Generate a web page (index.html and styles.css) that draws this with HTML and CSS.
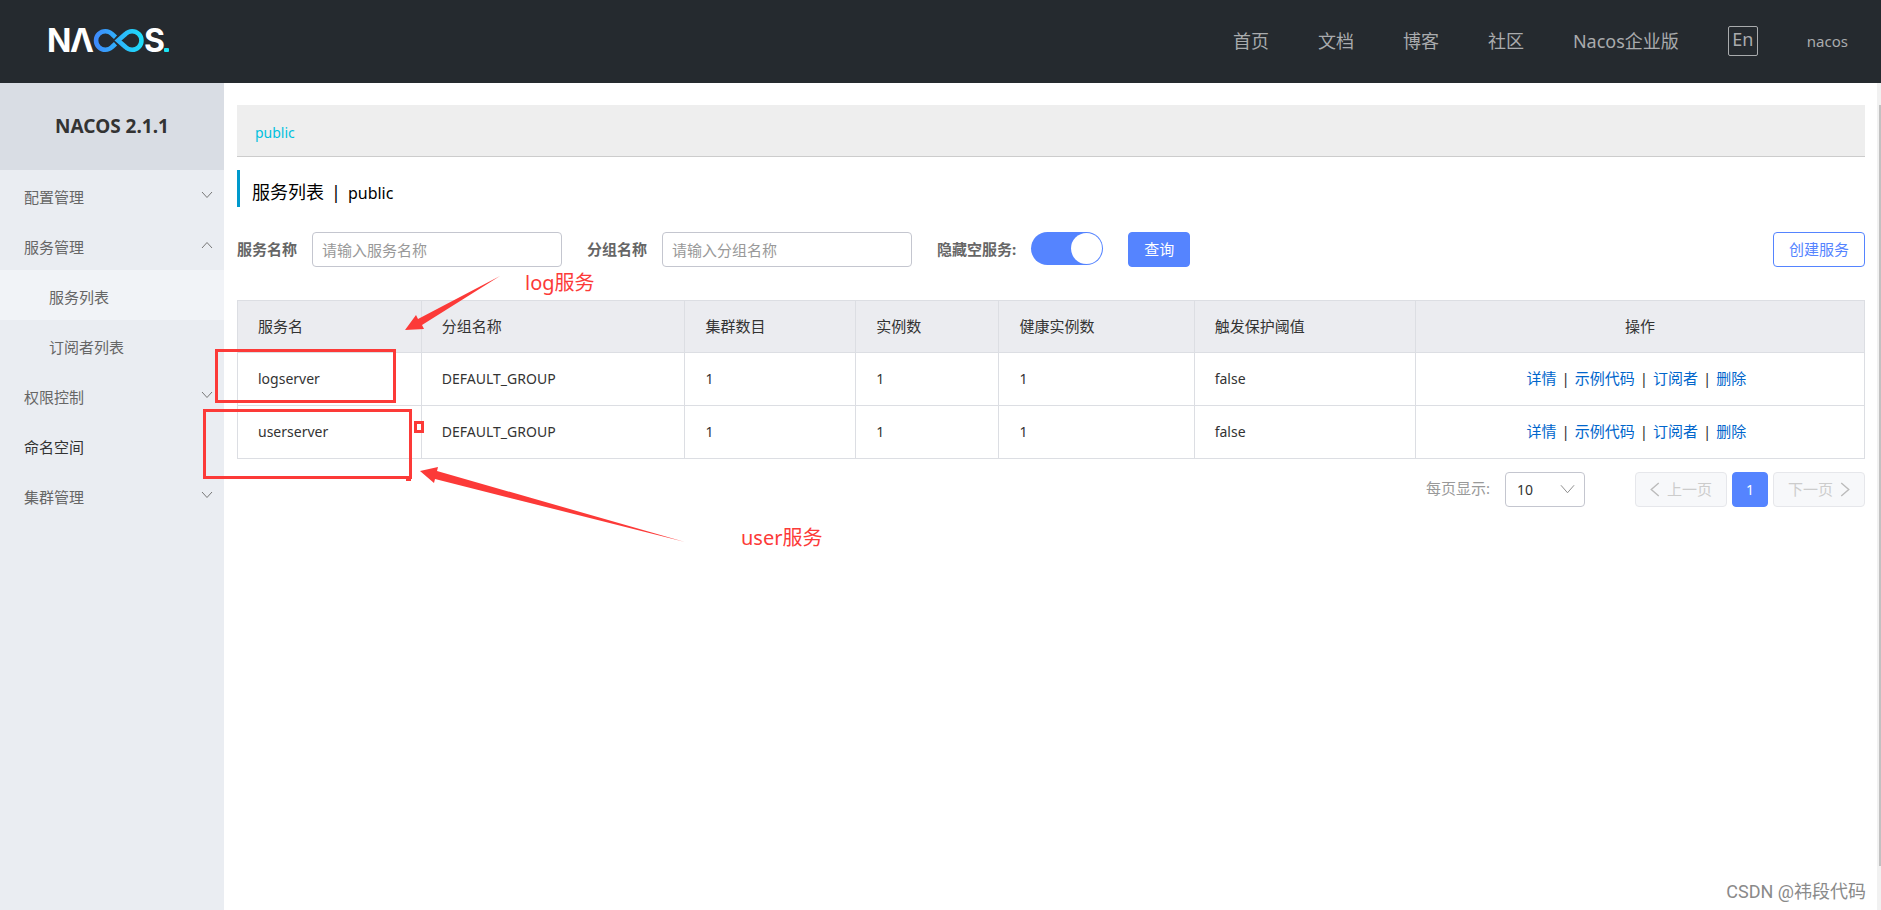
FILE: index.html
```html
<!DOCTYPE html>
<html lang="zh-CN">
<head>
<meta charset="utf-8">
<title>Nacos</title>
<link rel="stylesheet" href="styles.css">
</head>
<body>
<header class="topbar">
  <a class="logo" href="#" aria-label="Nacos">
    <svg width="130" height="48" viewBox="-4 -9 130 48">
      <defs>
        <linearGradient id="loop" gradientUnits="userSpaceOnUse" x1="46" y1="0" x2="96" y2="0">
          <stop offset="0" stop-color="#4088fb"/><stop offset="1" stop-color="#1ce0fa"/>
        </linearGradient>
      </defs>
      <g class="logo-text"><text x="-1" y="26">N</text><text x="22" y="26">Λ</text><text x="96" y="26">S</text></g>
      <g fill="none" stroke="url(#loop)" stroke-width="4.6">
        <path d="M67.500 11.200L64 8A9.300 9.300 0 1 0 64 21L67.500 17.800"/>
        <path d="M70 14.500L77.500 8A9.300 9.300 0 1 1 77.500 21Z"/>
      </g>
      <rect x="116" y="22" width="5" height="4" rx="1" fill="#1be4f5"/>
    </svg>
  </a>
  <nav class="nav">
    <a href="#">首页</a><a href="#">文档</a><a href="#">博客</a><a href="#">社区</a><a href="#">Nacos企业版</a>
    <button class="lang" type="button">En</button>
    <a class="user" href="#">nacos</a>
  </nav>
</header>
<div class="layout">
  <aside class="sidebar">
    <h1 class="version">NACOS 2.1.1</h1>
    <ul class="menu">
      <li><a href="#">配置管理<svg class="chev" viewBox="0 0 12 8"><path d="M1 1l5 5.500L11 1"/></svg></a></li>
      <li><a href="#">服务管理<svg class="chev" viewBox="0 0 12 8"><path d="M1 7l5-5.500L11 7"/></svg></a></li>
      <li><a class="sub active" href="#">服务列表</a></li>
      <li><a class="sub" href="#">订阅者列表</a></li>
      <li><a href="#">权限控制<svg class="chev" viewBox="0 0 12 8"><path d="M1 1l5 5.500L11 1"/></svg></a></li>
      <li><a class="leaf" href="#">命名空间</a></li>
      <li><a href="#">集群管理<svg class="chev" viewBox="0 0 12 8"><path d="M1 1l5 5.500L11 1"/></svg></a></li>
    </ul>
  </aside>
  <main class="content">
    <div class="namespaces"><a href="#">public</a></div>
    <h2 class="title">服务列表<span class="bar">|</span><span class="latin">public</span></h2>
    <form class="filters">
      <label for="service">服务名称</label>
      <input class="field" id="service" type="text" placeholder="请输入服务名称">
      <label class="next" for="group">分组名称</label>
      <input class="field" id="group" type="text" placeholder="请输入分组名称">
      <label class="next" for="hide">隐藏空服务:</label>
      <input class="switch" id="hide" type="checkbox" checked>
      <button class="btn primary" type="button">查询</button>
      <button class="btn outline" type="button">创建服务</button>
    </form>
    <table class="services">
      <colgroup><col class="c-name"><col class="c-group"><col class="c-cluster"><col class="c-inst"><col class="c-health"><col class="c-guard"><col></colgroup>
      <thead>
        <tr><th>服务名</th><th>分组名称</th><th>集群数目</th><th>实例数</th><th>健康实例数</th><th>触发保护阈值</th><th class="ops">操作</th></tr>
      </thead>
      <tbody>
        <tr><td>logserver</td><td>DEFAULT_GROUP</td><td>1</td><td>1</td><td>1</td><td>false</td>
          <td class="ops"><div class="actions"><a href="#">详情</a><span>|</span><a href="#">示例代码</a><span>|</span><a href="#">订阅者</a><span>|</span><a href="#">删除</a></div></td></tr>
        <tr><td>userserver</td><td>DEFAULT_GROUP</td><td>1</td><td>1</td><td>1</td><td>false</td>
          <td class="ops"><div class="actions"><a href="#">详情</a><span>|</span><a href="#">示例代码</a><span>|</span><a href="#">订阅者</a><span>|</span><a href="#">删除</a></div></td></tr>
      </tbody>
    </table>
    <div class="pager">
      <label for="size">每页显示:</label>
      <div class="select">
        <select id="size"><option>10</option></select>
        <svg viewBox="0 0 16 10"><path d="M1 1l7 8 7-8"/></svg>
      </div>
      <button class="page step" type="button" disabled><svg viewBox="0 0 10 16"><path d="M9 1L1 8l8 7"/></svg>上一页</button>
      <button class="page current" type="button">1</button>
      <button class="page step" type="button" disabled>下一页<svg viewBox="0 0 10 16"><path d="M1 1l8 7-8 7"/></svg></button>
    </div>
  </main>
  <div class="track"><div class="thumb"></div></div>
</div>
<div class="notes">
  <svg width="860" height="600" viewBox="0 0 860 600">
    <g fill="none" stroke="#fc3a38" stroke-width="3">
      <rect x="216.500" y="350.500" width="178" height="51"/>
      <rect x="204.500" y="410.500" width="206" height="67"/>
      <rect x="415.500" y="422.500" width="7" height="9"/>
    </g>
    <g fill="#fc3a38">
      <rect x="406" y="477" width="5" height="4"/>
      <path d="M405 330L416 315L418 319L500 276L422 325L424 329Z"/>
      <path d="M420 471L438 467L437 471L685 542L435 479L434 483Z"/>
    </g>
  </svg>
  <span class="note log">log服务</span>
  <span class="note usr">user服务</span>
</div>
<div class="watermark">CSDN @祎段代码</div>
</body>
</html>
```
FILE: styles.css
```css
* { box-sizing: border-box; }

body {
  margin: 0;
  min-height: 100vh;
  display: flex;
  flex-direction: column;
  position: relative;
  background: #fff;
  color: #333;
  font: 15px/20px "Noto Sans", "Noto Sans CJK SC", sans-serif;
}

a { color: inherit; text-decoration: none; }

button, input, select { font: inherit; }

.topbar {
  height: 83px;
  padding: 0 33px 2px 44px;
  display: flex;
  align-items: center;
  justify-content: space-between;
  background: #252a2f;
}

.logo svg { display: block; }

.logo-text {
  fill: #fff;
  font: 700 32px Inter, sans-serif;
}

.nav {
  display: flex;
  align-items: center;
  gap: 49px;
  color: #a9abad;
  font-size: 18px;
}

.lang {
  width: 30px;
  height: 30px;
  padding: 0 0 4px;
  border: 1px solid #a9abad;
  border-radius: 2px;
  background: none;
  color: inherit;
  line-height: 24px;
}

.user { font-size: 15px; }

.layout {
  flex: 1;
  display: grid;
  grid-template-columns: 224px 1fr 4px;
}

.sidebar { background: #eaedf2; }

.version {
  margin: 0;
  background: #d9dde4;
  font-size: 19px;
  line-height: 87px;
  text-align: center;
}

.menu {
  margin: 0;
  padding: 0;
  list-style: none;
  color: #666;
}

.menu a {
  height: 50px;
  padding: 3px 11px 0 24px;
  display: flex;
  align-items: center;
  justify-content: space-between;
}

.menu .sub { padding-left: 49px; }
.menu .active { background: #f1f3f7; }
.menu .leaf { color: #333; }

.chev {
  width: 12px;
  height: 8px;
  margin-bottom: 4px;
  fill: none;
  stroke: #777;
}

.content { padding: 22px 12px 0 13px; }

.namespaces {
  padding: 18px 18px 13px;
  border-bottom: 1px solid #ccc;
  background: #eee;
  color: #00c1de;
  font-size: 14px;
}

.title {
  margin: 13px 0 25px;
  padding: 8px 0 0 12px;
  border-left: 3px solid #09c;
  display: flex;
  align-items: baseline;
  color: #000;
  font-size: 18px;
  font-weight: 400;
  line-height: 28px;
}

.bar { margin: 0 7px; }
.latin { font-size: 16px; }

.filters {
  display: flex;
  align-items: center;
  gap: 15px;
}

.filters label {
  padding-bottom: 2px;
  color: #666;
  font-weight: 700;
}

.filters .next { margin-left: 10px; }

.field {
  width: 250px;
  height: 35px;
  padding: 1px 9px 0;
  border: 1px solid #c4c6cf;
  border-radius: 4px;
}

.field::placeholder { color: #999; opacity: 1; }

.switch {
  appearance: none;
  width: 72px;
  height: 33px;
  margin: 0 10px 2px 0;
  padding: 1px;
  display: flex;
  justify-content: flex-end;
  border-radius: 17px;
  background: #5584ff;
}

.switch::before {
  content: "";
  width: 31px;
  height: 31px;
  border-radius: 50%;
  background: #fff;
}

.btn {
  height: 35px;
  padding: 0 15px 1px;
  border: 1px solid #5584ff;
  border-radius: 4px;
}

.primary { background: #5584ff; color: #fff; }

.outline {
  margin-left: auto;
  background: #fff;
  color: #5584ff;
}

.services {
  width: 100%;
  margin-top: 33px;
  border-collapse: collapse;
  table-layout: fixed;
}

.services th, .services td {
  height: 52px;
  padding: 0 20px 2px;
  border: 1px solid #dcdee3;
  text-align: left;
}

.services th {
  background: #ebecf0;
  font-weight: 400;
}

.services td { height: 53px; padding-bottom: 1px; font-size: 14px; }
.services .ops { text-align: center; }

.c-name { width: 11.3%; }
.c-group { width: 16.2%; }
.c-cluster { width: 10.5%; }
.c-inst { width: 8.8%; }
.c-health { width: 12%; }
.c-guard { width: 13.600%; }

.actions {
  padding: 0 7px 2px 0;
  display: flex;
  justify-content: center;
  gap: 5px;
  font-size: 15px;
}

.actions a { color: #06c; }

.pager {
  margin-top: 13px;
  display: flex;
  justify-content: flex-end;
  gap: 5px;
  line-height: 33px;
}

.pager label { color: #999; }

.select {
  position: relative;
  margin: 0 45px 0 10px;
}

.select select {
  appearance: none;
  display: block;
  width: 80px;
  height: 35px;
  padding: 0 11px;
  border: 1px solid #c4c6cf;
  border-radius: 4px;
  background: #fff;
  color: #333;
  font-size: 14px;
}

.select svg {
  position: absolute;
  right: 10px;
  top: 12px;
  width: 15px;
  height: 10px;
  fill: none;
  stroke: #888;
}

.page {
  height: 35px;
  padding: 0;
  display: flex;
  align-items: center;
  justify-content: center;
  gap: 7px;
  border: 1px solid #e6e7eb;
  border-radius: 4px;
}

.page svg {
  width: 10px;
  height: 15px;
  fill: none;
  stroke: #bbb;
  stroke-width: 1.500;
}

.step {
  width: 92px;
  background: #f7f8fa;
  color: #ccc;
}

.current {
  width: 36px;
  border-color: #5584ff;
  background: #5584ff;
  color: #fff;
  font-size: 14px;
}

.track {
  padding: 22px 0 44px 2px;
  display: flex;
  background: #f1f1f1;
}

.thumb { flex: 1; background: #c1c1c1; }

.notes {
  position: absolute;
  left: 0;
  top: 0;
  pointer-events: none;
}

.notes svg { display: block; }

.note {
  position: absolute;
  color: #fc3a38;
  font-size: 20px;
  line-height: 28px;
  white-space: nowrap;
}

.log { left: 525px; top: 269px; }
.usr { left: 741px; top: 524px; }

.watermark {
  position: absolute;
  right: 15px;
  bottom: 6px;
  color: #8a8a8a;
  font: 18px/24px Roboto, "Noto Sans CJK SC", sans-serif;
  text-shadow: 1px 1px 0 #fff;
}
```
